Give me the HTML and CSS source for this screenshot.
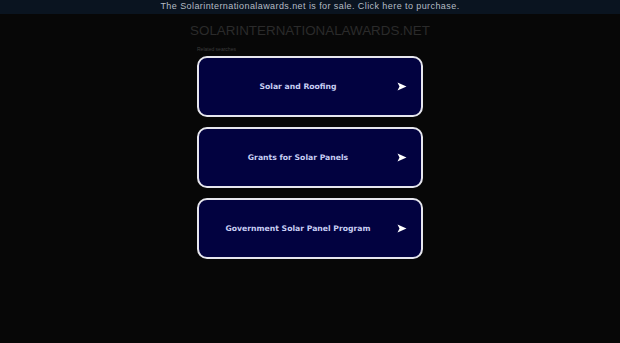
FILE: index.html
```html
<!DOCTYPE html>
<html>
<head>
<meta charset="utf-8">
<link rel="stylesheet" href="styles.css">
</head>
<body>
<div class="topbar">The Solarinternationalawards.net is for sale. Click here to purchase.</div>
<h1 class="title">SOLARINTERNATIONALAWARDS.NET</h1>
<div class="wrap">
  <div class="related">Related searches</div>
  <a class="btn" href="#"><span class="label">Solar and Roofing</span><svg class="arrow" viewBox="0 0 10 9" width="10" height="9"><path d="M0.5 0.5 L9.5 4.5 L0.5 8.5 L2.5 4.5 Z" fill="#fff"/></svg></a>
  <a class="btn" href="#"><span class="label">Grants for Solar Panels</span><svg class="arrow" viewBox="0 0 10 9" width="10" height="9"><path d="M0.5 0.5 L9.5 4.5 L0.5 8.5 L2.5 4.5 Z" fill="#fff"/></svg></a>
  <a class="btn" href="#"><span class="label">Government Solar Panel Program</span><svg class="arrow" viewBox="0 0 10 9" width="10" height="9"><path d="M0.5 0.5 L9.5 4.5 L0.5 8.5 L2.5 4.5 Z" fill="#fff"/></svg></a>
</div>
</body>
</html>
```
FILE: styles.css
```css
html, body {
  margin: 0;
  padding: 0;
  background: #070707;
  height: 100%;
}
.topbar {
  height: 14px;
  line-height: 13px;
  background: #0a1420;
  color: #b4bcc4;
  font-family: "Liberation Sans", Arial, sans-serif;
  font-size: 9px;
  letter-spacing: 0.42px;
  text-align: center;
}
.title {
  margin: 8px 0 0 0;
  height: 18px;
  line-height: 18px;
  font-family: "Liberation Sans", Arial, sans-serif;
  font-weight: normal;
  font-size: 13.4px;
  color: #2b2b2b;
  text-align: center;
}
.wrap {
  width: 226px;
  margin: 0 auto;
  display: flex;
  flex-direction: column;
  gap: 10px;
}
.related {
  font-family: "Liberation Sans", Arial, sans-serif;
  font-size: 5px;
  color: #3c3c3c;
  height: 6px;
  line-height: 6px;
  margin: 6px 0 -6px 0;
}
.btn {
  box-sizing: border-box;
  height: 61px;
  border: 2px solid #e6e6ee;
  border-radius: 10px;
  background: #020240;
  display: flex;
  align-items: center;
  justify-content: center;
  padding-right: 24px;
  position: relative;
  text-decoration: none;
}
.label {
  font-family: "DejaVu Sans", Verdana, sans-serif;
  font-weight: bold;
  font-size: 7.7px;
  letter-spacing: 0;
  color: #c8cef4;
}
.arrow {
  position: absolute;
  right: 14px;
  top: 24px;
}
```
